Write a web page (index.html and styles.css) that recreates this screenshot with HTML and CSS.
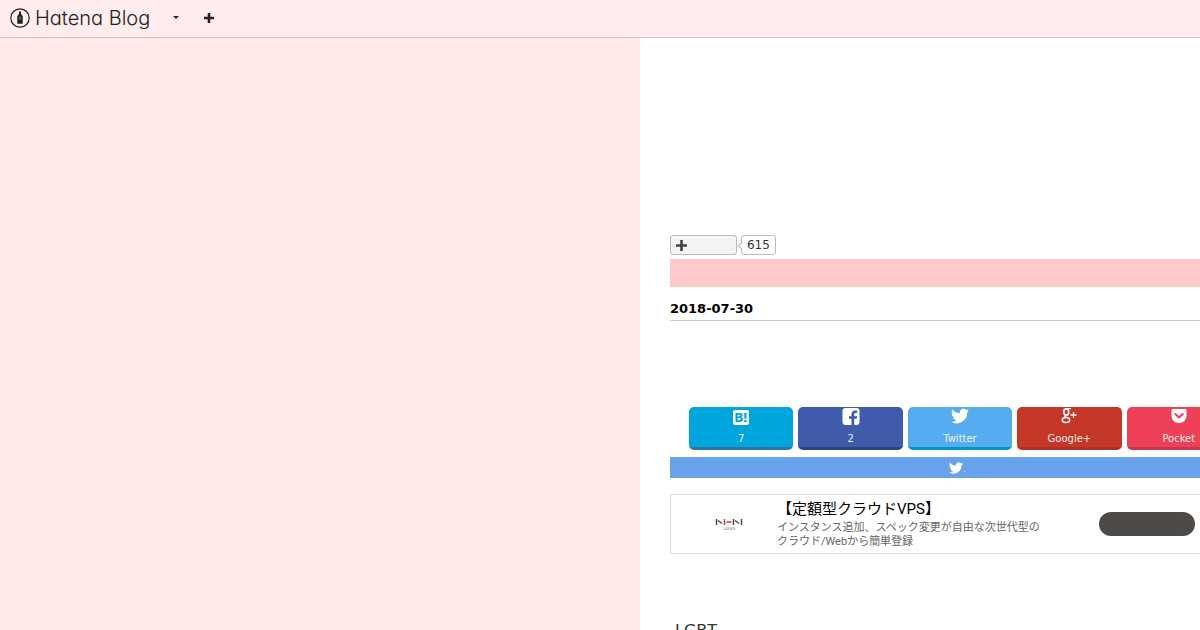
FILE: index.html
```html
<!DOCTYPE html>
<html lang="ja">
<head>
    <meta charset="UTF-8">
    <meta name="viewport" content="width=device-width, initial-scale=1.0">
    <title>Hatena Blog</title>
    <link rel="stylesheet" href="styles.css">
</head>
<body>
    <header class="global-header">
        <a href="/" class="logo">
            <svg class="logo-mark" viewBox="0 0 20 20" aria-hidden="true">
                <circle cx="10" cy="10" r="9.2" fill="none" stroke="#222" stroke-width="1.2"/>
                <path d="M9 3.500h2v2.300l1.700 2.400v7.600H7.300V8.200L9 5.800z" fill="#222"/>
                <path d="M10 8.500v3" stroke="#ffecec" stroke-width=".7"/>
            </svg>
            <span>Hatena Blog</span>
        </a>
        <button class="header-button" aria-label="Menu">
            <svg width="6" height="3" viewBox="0 0 6 3"><path d="M0 0h6L3 3z" fill="#222"/></svg>
        </button>
        <button class="header-button" aria-label="Subscribe">
            <svg width="10" height="10" viewBox="0 0 10 10"><path d="M5 0v10M0 5h10" stroke="#222" stroke-width="2.600"/></svg>
        </button>
    </header>

    <div class="container">
        <aside class="side"></aside>
        <main class="main">
            <div class="content">
                <div class="subscribe">
                    <button class="subscribe-button" aria-label="Subscribe to this blog">
                        <svg width="11" height="11" viewBox="0 0 11 11"><path d="M5.500 0v11M0 5.500h11" stroke="#444" stroke-width="2.600"/></svg>
                    </button>
                    <a href="#subscribers" class="subscribe-count">615</a>
                </div>
                <div class="title-band"></div>
                <time class="date" datetime="2018-07-30">2018-07-30</time>

                <nav class="share">
                    <a href="#hatena" class="share-button hatena">
                        <svg viewBox="0 0 18 18">
                            <rect x="1" y="3" width="16" height="15" rx="2" fill="#fff"/>
                            <path transform="translate(0 1)" fill="#00a5de" fill-rule="evenodd" d="M3.500 5h3.800c2.200 0 3.300.8 3.300 2.300 0 1-.6 1.600-1.600 1.800 1.300.2 2 .9 2 2.100 0 1.800-1.300 2.800-3.500 2.800h-4zm2.200 1.700v1.700h1.200c.9 0 1.400-.3 1.400-.9s-.5-.8-1.400-.8zm0 3.400v2.200h1.500c.9 0 1.400-.4 1.400-1.100s-.6-1.100-1.500-1.100zM12.300 5h2.200v5.700h-2.200zM12.300 11.800h2.200V14h-2.200z"/>
                        </svg>
                        <span>7</span>
                    </a>
                    <a href="#facebook" class="share-button facebook">
                        <svg viewBox="0 0 18 18">
                            <rect x="0.500" y="1" width="17" height="17" rx="3" fill="#fff"/>
                            <path fill="#3f5ba9" d="M9.500 18v-6.200H7V9.200h2.500V7.300C9.500 4.900 10.900 3.600 13 3.600h2.200V6h-1.500c-1.200 0-1.500.6-1.500 1.500v1.700h2.900l-.4 2.600h-2.500V18z"/>
                        </svg>
                        <span>2</span>
                    </a>
                    <a href="#twitter" class="share-button twitter">
                        <svg viewBox="0 0 24 24"><path fill="#fff" d="M24 4.600a10 10 0 0 1-2.800.8 5 5 0 0 0 2.100-2.700c-1 .6-2 1-3.100 1.200a4.900 4.900 0 0 0-8.400 4.500A14 14 0 0 1 1.700 3.200a4.900 4.900 0 0 0 1.500 6.500 5 5 0 0 1-2.200-.6c0 2.300 1.600 4.400 3.900 4.900-.7.200-1.500.2-2.200.1a4.900 4.900 0 0 0 4.600 3.400A10 10 0 0 1 0 19.500 14 14 0 0 0 21.500 7.100c1-.7 1.800-1.600 2.500-2.500z"/></svg>
                        <span>Twitter</span>
                    </a>
                    <a href="#google" class="share-button google">
                        <svg viewBox="0 0 18 18" fill="none" stroke="#fff">
                            <ellipse cx="6.200" cy="5" rx="2.500" ry="3.200" stroke-width="1.700"/>
                            <path d="M6 1.600h5" stroke-width="1.200"/>
                            <path d="M5.500 8.300c-1.200 1-.8 1.800 1 2.200" stroke-width="1.300"/>
                            <ellipse cx="6" cy="13" rx="3.700" ry="2.500" stroke-width="1.500"/>
                            <path d="M13.500 5v6M10.500 8h6" stroke-width="1.300"/>
                        </svg>
                        <span>Google+</span>
                    </a>
                    <a href="#pocket" class="share-button pocket">
                        <svg viewBox="0 0 18 18">
                            <path fill="#fff" d="M3 2h12c1 0 1.500.6 1.500 1.500v5c0 4.500-3.300 7.500-7.500 7.500s-7.500-3-7.500-7.500v-5C1.500 2.600 2 2 3 2z"/>
                            <path d="M5.300 7L9 10.500 12.700 7" fill="none" stroke="#ee4056" stroke-width="2" stroke-linecap="round" stroke-linejoin="round"/>
                        </svg>
                        <span>Pocket</span>
                    </a>
                </nav>

                <a href="#tweet" class="tweet-bar">
                    <svg viewBox="0 0 24 24" width="14" height="14" aria-hidden="true"><path fill="#fff" d="M24 4.600a10 10 0 0 1-2.800.8 5 5 0 0 0 2.100-2.700c-1 .6-2 1-3.100 1.200a4.900 4.900 0 0 0-8.400 4.500A14 14 0 0 1 1.700 3.200a4.900 4.900 0 0 0 1.500 6.500 5 5 0 0 1-2.200-.6c0 2.300 1.600 4.400 3.900 4.900-.7.200-1.500.2-2.200.1a4.900 4.900 0 0 0 4.600 3.400A10 10 0 0 1 0 19.500 14 14 0 0 0 21.500 7.100c1-.7 1.800-1.600 2.500-2.500z"/></svg>
                    <span>.</span>
                </a>

                <a href="#ad" class="ad">
                    <span class="ad-logo">
                        <svg width="28" height="12" viewBox="0 0 28 12" fill="none">
                            <path d="M1.500 1v6M3 2.500l4 3M18.500 1v6M20 2.500l4 3M26.500 1v6" stroke="#444" stroke-width="1.400"/>
                            <path d="M9.500 1v6M11.500 4h5" stroke="#c8303c" stroke-width="1.400"/>
                            <text x="14" y="12" text-anchor="middle" font-size="4" fill="#888">JAPAN</text>
                        </svg>
                    </span>
                    <span class="ad-text">
                        <span class="ad-title">【定額型クラウドVPS】</span>
                        <span class="ad-description">インスタンス追加、スペック変更が自由な次世代型のクラウド/Webから簡単登録</span>
                    </span>
                    <span class="ad-button"></span>
                </a>

                <p class="entry-text">LGBT</p>
            </div>
        </main>
    </div>
</body>
</html>
```
FILE: styles.css
```css
* {
    box-sizing: border-box;
}

body {
    margin: 0;
    font-family: "DejaVu Sans", "Noto Sans CJK JP", sans-serif;
    color: #333;
    background-color: #fff;
}

a {
    color: inherit;
    text-decoration: none;
}

button {
    padding: 0;
    cursor: pointer;
}

.global-header {
    display: flex;
    align-items: center;
    height: 38px;
    padding: 0 10px 2px;
    background-color: #ffecec;
    border-bottom: 1px solid #d0bfc4;
}

.logo {
    display: flex;
    align-items: center;
    gap: 5px;
    margin-right: 18px;
    font-family: Inter, sans-serif;
    font-size: 20px;
    font-weight: 300;
    font-feature-settings: "cv11";
    white-space: nowrap;
    color: #222;
}

.logo-mark {
    width: 20px;
    height: 20px;
}

.header-button {
    display: flex;
    align-items: center;
    justify-content: center;
    width: 16px;
    height: 24px;
    margin-right: 17px;
    border: none;
    background: none;
}

.container {
    display: flex;
    min-height: calc(100vh - 38px);
}

.side {
    flex: 0 0 53.3333%;
    background-color: #ffeaea;
}

.main {
    flex: 1;
    min-width: 0;
    height: calc(100vh - 38px);
    padding: 197px 0 0 30px;
    overflow: hidden;
}

.content {
    width: 580px;
}

.subscribe {
    display: flex;
    gap: 4px;
    height: 20px;
    margin-bottom: 4px;
}

.subscribe-button {
    display: flex;
    align-items: center;
    width: 67px;
    padding-left: 5px;
    border: 1px solid #bbb;
    border-radius: 3px;
    background-color: #f4f4f4;
}

.subscribe-count {
    position: relative;
    padding: 0 5px;
    border: 1px solid #bbb;
    border-radius: 3px;
    font-size: 12px;
    line-height: 18px;
}

.subscribe-count::before {
    content: "";
    position: absolute;
    left: -3px;
    top: 7px;
    width: 5px;
    height: 5px;
    border-left: 1px solid #bbb;
    border-bottom: 1px solid #bbb;
    background-color: #fff;
    transform: rotate(45deg);
}

.title-band {
    height: 28px;
    background-color: #fdcaca;
}

.date {
    display: block;
    padding: 12px 0 1px;
    border-bottom: 1px solid #ccc;
    font-size: 13px;
    font-weight: bold;
    line-height: 20px;
    color: #000;
}

.share {
    display: grid;
    grid-template-columns: repeat(5, 1fr);
    gap: 5px;
    margin: 86px 19px 7px;
}

.share-button {
    display: flex;
    flex-direction: column;
    align-items: center;
    height: 43px;
    border-bottom: 3px solid;
    border-radius: 5px;
    font-size: 10px;
    line-height: 12px;
    color: #fff;
}

.share-button svg {
    width: 18px;
    height: 18px;
    margin-bottom: 8px;
}

.share-button span {
    opacity: 0.9;
}

.hatena {
    background-color: #00a5de;
    border-color: #2b75a9;
}

.facebook {
    background-color: #3f5ba9;
    border-color: #2c4383;
}

.twitter {
    background-color: #55acee;
    border-color: #0092ca;
}

.google {
    background-color: #c53727;
    border-color: #ad3025;
}

.pocket {
    background-color: #ee4056;
    border-color: #c6374c;
}

.tweet-bar {
    display: flex;
    align-items: center;
    justify-content: center;
    height: 21px;
    margin-bottom: 16px;
    padding-right: 5px;
    background-color: #69a3eb;
    font-size: 8px;
    line-height: 16px;
    color: #fff;
}

.tweet-bar span {
    align-self: flex-end;
}

.ad {
    display: flex;
    align-items: center;
    height: 60px;
    padding-right: 54px;
    border: 1px solid #ddd;
    font-family: Roboto, "Noto Sans CJK JP", sans-serif;
}

.ad-logo {
    width: 106px;
    padding-left: 44px;
}

.ad-text {
    display: flex;
    flex-direction: column;
    width: 270px;
    padding-bottom: 2px;
}

.ad-title {
    font-size: 15px;
    line-height: 24px;
    color: #000;
}

.ad-description {
    font-size: 11px;
    line-height: 14px;
    color: #666;
}

.ad-button {
    width: 96px;
    height: 24px;
    margin-left: auto;
    border-radius: 12px;
    background-color: #4d4a47;
}

.entry-text {
    margin: 67px 0 0 5px;
    font-size: 16px;
    line-height: 20px;
}
```
